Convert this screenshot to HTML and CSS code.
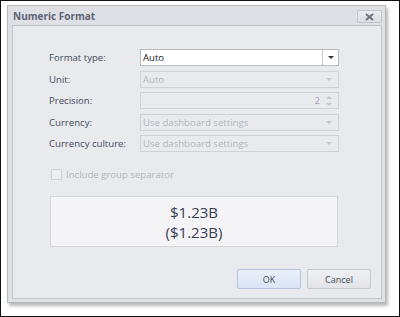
FILE: index.html
```html
<!DOCTYPE html>
<html lang="en">
<head>
    <meta charset="UTF-8">
    <title>Numeric Format</title>
    <link rel="stylesheet" href="styles.css">
</head>
<body>
    <div class="frame">
        <div class="dialog">
            <div class="titlebar">
                <span class="title">Numeric Format</span>
                <button class="close-btn">
                    <svg width="9" height="8" viewBox="0 0 9 8"><path d="M1 1 L8 7 M8 1 L1 7" stroke="#6d7280" stroke-width="2"/></svg>
                </button>
            </div>
            <div class="content">
                <div class="form">
                    <label>Format type:</label>
                    <div class="combo active">
                        <span class="value">Auto</span>
                        <span class="drop-btn"><i class="tri dark"></i></span>
                    </div>

                    <label>Unit:</label>
                    <div class="combo disabled">
                        <span class="value">Auto</span>
                        <i class="tri"></i>
                    </div>

                    <label>Precision:</label>
                    <div class="combo disabled spin">
                        <span class="value num">2</span>
                        <span class="spinner"><i class="tri up"></i><i class="tri"></i></span>
                    </div>

                    <label>Currency:</label>
                    <div class="combo disabled">
                        <span class="value">Use dashboard settings</span>
                        <i class="tri"></i>
                    </div>

                    <label>Currency culture:</label>
                    <div class="combo disabled">
                        <span class="value">Use dashboard settings</span>
                        <i class="tri"></i>
                    </div>
                </div>

                <div class="check-row">
                    <span class="checkbox"></span>
                    <span>Include group separator</span>
                </div>

                <div class="preview">
                    <div>$1.23B</div>
                    <div>($1.23B)</div>
                </div>

                <div class="buttons">
                    <button class="btn ok">OK</button>
                    <button class="btn">Cancel</button>
                </div>
            </div>
        </div>
    </div>
</body>
</html>
```

FILE: styles.css
```css
html, body {
    margin: 0;
    padding: 0;
}
body {
    font-family: "Open Sans", "Noto Sans", sans-serif;
    font-size: 9.6px;
    color: #434a5a;
}
.frame {
    width: 400px;
    height: 317px;
    box-sizing: border-box;
    border: 1px solid #111;
    background: #fff;
    padding: 4px 0 0 6px;
}
.dialog {
    width: 379px;
    height: 298px;
    box-sizing: border-box;
    background: #dfe0e5;
    border: 1px solid #b6b8bf;
    box-shadow: 2px 3px 3px rgba(0,0,0,0.28);
    display: flex;
    flex-direction: column;
    padding: 0 3px 3px 4px;
}
.titlebar {
    height: 19px;
    display: flex;
    align-items: center;
    justify-content: space-between;
}
.title {
    font-weight: bold;
    color: #5e6474;
    font-size: 10px;
    padding-left: 1px;
}
.close-btn {
    width: 25px;
    height: 13px;
    margin-top: 2px;
    padding: 0;
    border: 1px solid #c4c6cd;
    border-radius: 2px;
    background: linear-gradient(#ebecef, #dcdde2);
    display: flex;
    align-items: center;
    justify-content: center;
}
.content {
    flex: 1;
    background: #e9eaee;
    border: 1px solid #c2c4cb;
    padding: 23px 43px 0 36px;
    display: flex;
    flex-direction: column;
}
.form {
    display: grid;
    grid-template-columns: 91px 199px;
    row-gap: 4.6px;
    align-items: center;
}
.form label {
    color: #434a5a;
}
.combo {
    height: 17px;
    box-sizing: border-box;
    border: 1px solid #d0d2d8;
    display: flex;
    align-items: center;
    padding-left: 2px;
}
.combo .value {
    flex: 1;
}
.combo.active {
    border-color: #b8bac2;
    background: #fff;
    color: #222;
    padding-right: 0;
}
.combo.active .value {
    align-self: stretch;
    display: flex;
    align-items: center;
    border-right: 1px solid #c8cad0;
}
.drop-btn {
    width: 15px;
    display: flex;
    justify-content: center;
    align-items: center;
}
.combo.disabled {
    color: #b2b5bd;
    padding-right: 6px;
}
.combo .num {
    text-align: right;
    padding-right: 6px;
    color: #9ea2ab;
}
.tri {
    width: 0;
    height: 0;
    border-left: 3px solid transparent;
    border-right: 3px solid transparent;
    border-top: 3px solid #c5c7cd;
}
.tri.dark {
    border-top-color: #333;
}
.tri.up {
    border-top: 0;
    border-bottom: 3px solid #c5c7cd;
}
.spinner {
    display: flex;
    flex-direction: column;
    gap: 4px;
}
.check-row {
    margin-top: 16px;
    margin-left: 2px;
    display: flex;
    align-items: center;
    gap: 4px;
    color: #b2b5bd;
}
.checkbox {
    width: 9px;
    height: 9px;
    border: 1px solid #d0d2d8;
    border-radius: 1px;
    background: #eceef1;
}
.preview {
    margin-top: 15px;
    margin-left: 1px;
    height: 51px;
    width: 288px;
    box-sizing: border-box;
    background: #f4f4f7;
    border: 1px solid #d4d6dc;
    display: flex;
    flex-direction: column;
    align-items: center;
    justify-content: center;
    font-size: 15px;
    color: #353d52;
}
.preview div {
    line-height: 20px;
    height: 20px;
}
.buttons {
    margin-top: 22px;
    margin-right: -33px;
    display: flex;
    justify-content: flex-end;
    gap: 6px;
}
.btn {
    width: 64px;
    height: 20px;
    font-family: inherit;
    font-size: 9px;
    color: #434a5a;
    border: 1px solid #c6c8ce;
    border-radius: 2px;
    background: linear-gradient(#eef0f3, #e2e4e8);
    padding: 0;
}
.btn.ok {
    border-color: #b7c3da;
    background: linear-gradient(#eaf0fb, #dbe4f5);
}
```
